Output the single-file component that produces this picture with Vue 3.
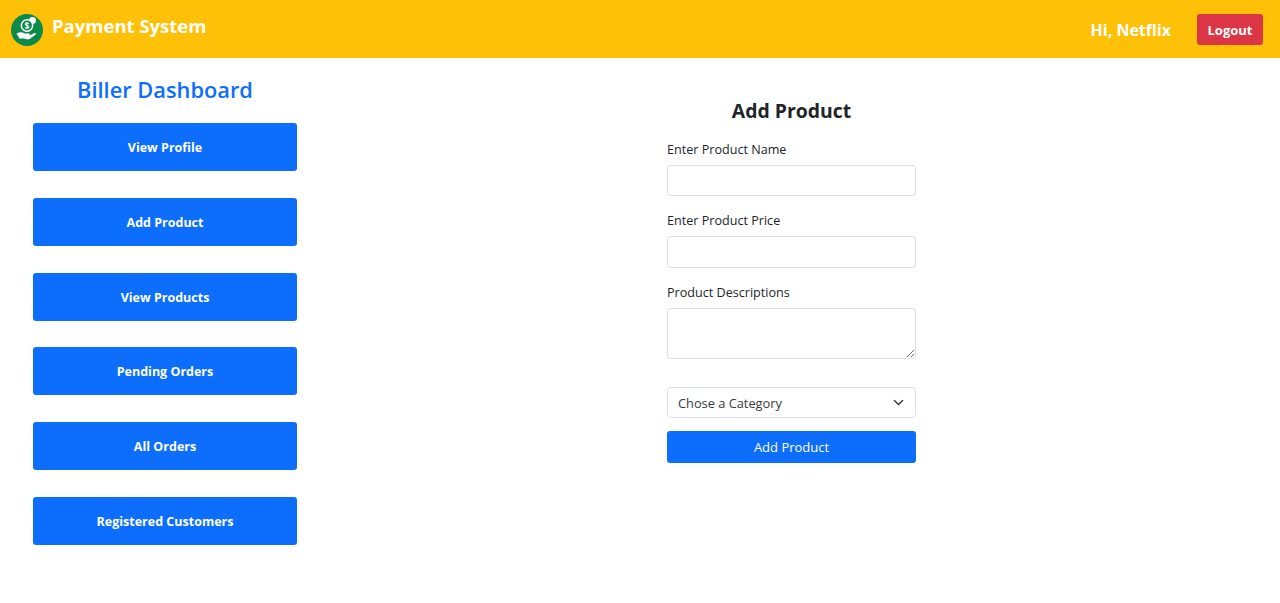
<script setup>
const menu = ['View Profile', 'Add Product', 'View Products', 'Pending Orders', 'All Orders', 'Registered Customers']
</script>

<template>
  <div class="page">
    <header class="topbar">
      <div class="brand">
        <svg class="logo" viewBox="0 0 32 32" aria-hidden="true">
          <circle cx="16" cy="16" r="16" fill="#0b8a4a" />
          <circle cx="21.500" cy="6.500" r="3.400" fill="#fff" />
          <circle cx="16" cy="11.500" r="6.400" fill="#fff" />
          <circle cx="16" cy="11.500" r="4.900" fill="#0b8a4a" />
          <path d="M16 8v7M17.800 9.600c-1-.9-3.600-.8-3.600.7 0 1.700 3.700.9 3.700 2.600 0 1.500-2.800 1.600-3.900.6" fill="none" stroke="#fff" stroke-width="1.100" />
          <path d="M5.500 19.500l3.500-1.200c2-.6 3.500.5 5 1.200h4c1.200 0 1.200 1.800 0 1.800h-3.500 4.500l4.500-2.200c1.300-.5 2 .9 1 1.700l-5.500 3.900c-1 .6-2 .8-3 .6l-5-1-2 .8z" fill="#fff" />
        </svg>
        <span class="brand-name">Payment System</span>
      </div>
      <div class="user">
        <span class="greeting">Hi, Netflix</span>
        <button class="logout" type="button">Logout</button>
      </div>
    </header>

    <main class="content">
      <aside class="sidebar">
        <h2 class="dash-title">Biller Dashboard</h2>
        <button v-for="item in menu" :key="item" class="menu-btn" type="button">{{ item }}</button>
      </aside>

      <section class="form-wrap">
        <form class="product-form" @submit.prevent>
          <h3 class="form-title">Add Product</h3>
          <label class="field-label">Enter Product Name</label>
          <input class="control" type="text" />
          <label class="field-label">Enter Product Price</label>
          <input class="control" type="text" />
          <label class="field-label">Product Descriptions</label>
          <textarea class="control area"></textarea>
          <div class="select">
            <span>Chose a Category</span>
            <svg class="chevron" viewBox="0 0 16 16" aria-hidden="true">
              <path d="M2 5l6 6 6-6" fill="none" stroke="#343a40" stroke-width="2" stroke-linecap="round" stroke-linejoin="round" />
            </svg>
          </div>
          <button class="submit" type="submit">Add Product</button>
        </form>
      </section>
    </main>
  </div>
</template>

<style>
html, body { margin: 0; background: #fff; }
</style>

<style scoped>
.page {
  height: 603px;
  overflow: hidden;
  font-family: "Open Sans", "Noto Sans", sans-serif;
  font-size: 12.6px;
  color: #212529;
}
.topbar {
  height: 57.500px;
  background: #ffc107;
  display: flex;
  align-items: center;
  justify-content: space-between;
  padding: 0 17px 0 11px;
  box-sizing: border-box;
}
.brand { display: flex; align-items: center; gap: 9px; }
.logo { width: 32px; height: 32px; display: block; margin-top: 3px; }
.brand-name {
  color: #fff;
  font-size: 18.500px;
  font-weight: 700;
  margin-top: -6px;
}
.user { display: flex; align-items: center; gap: 26px; margin-top: 1px; }
.greeting { color: #fff; font-size: 16px; font-weight: 700; padding-top: 1px; }
.logout {
  width: 66px;
  height: 31px;
  border: 0;
  border-radius: 3px;
  background: #dc3545;
  color: #fff;
  font: 700 13px "Open Sans", sans-serif;
  padding: 1px 0 0;
}
.content { display: flex; }
.sidebar {
  width: 330px;
  padding: 0 33px;
  box-sizing: border-box;
  display: flex;
  flex-direction: column;
  gap: 26.800px;
}
.dash-title {
  margin: 16.500px 0 -9.800px;
  height: 32px;
  line-height: 32px;
  text-align: center;
  color: #0d6efd;
  font-size: 21.800px;
  font-weight: 600;
}
.menu-btn {
  height: 48px;
  border: 0;
  border-radius: 3px;
  background: #0d6efd;
  color: #fff;
  font: 700 12.500px "Open Sans", sans-serif;
  padding: 1px 0 0;
}
.form-wrap { margin-left: 337px; width: 249px; }
.product-form { display: flex; flex-direction: column; }
.form-title {
  margin: 40.500px 0 15.800px;
  height: 26px;
  line-height: 26px;
  text-align: center;
  font-size: 19.400px;
  font-weight: 700;
}
.field-label {
  height: 18px;
  line-height: 20px;
  margin-bottom: 7px;
}
.control {
  display: block;
  width: 100%;
  height: 31.500px;
  box-sizing: border-box;
  border: 1px solid #dee2e6;
  border-radius: 3px;
  background: #fff;
  margin-bottom: 15px;
  padding: 5px 10px;
  font: inherit;
  outline: none;
}
.area { height: 51.500px; margin-bottom: 27.500px; }
.select {
  height: 31.500px;
  box-sizing: border-box;
  border: 1px solid #dee2e6;
  border-radius: 3px;
  padding: 0 11px 0 10px;
  display: flex;
  align-items: center;
  justify-content: space-between;
  color: #343a40;
  font-size: 12.800px;
}
.chevron { width: 11px; height: 11px; margin-top: -1px; }
.submit {
  margin-top: 13px;
  height: 31.500px;
  border: 0;
  border-radius: 3px;
  background: #0d6efd;
  color: #fff;
  font: 400 13px "Open Sans", sans-serif;
  padding: 0;
}
</style>
